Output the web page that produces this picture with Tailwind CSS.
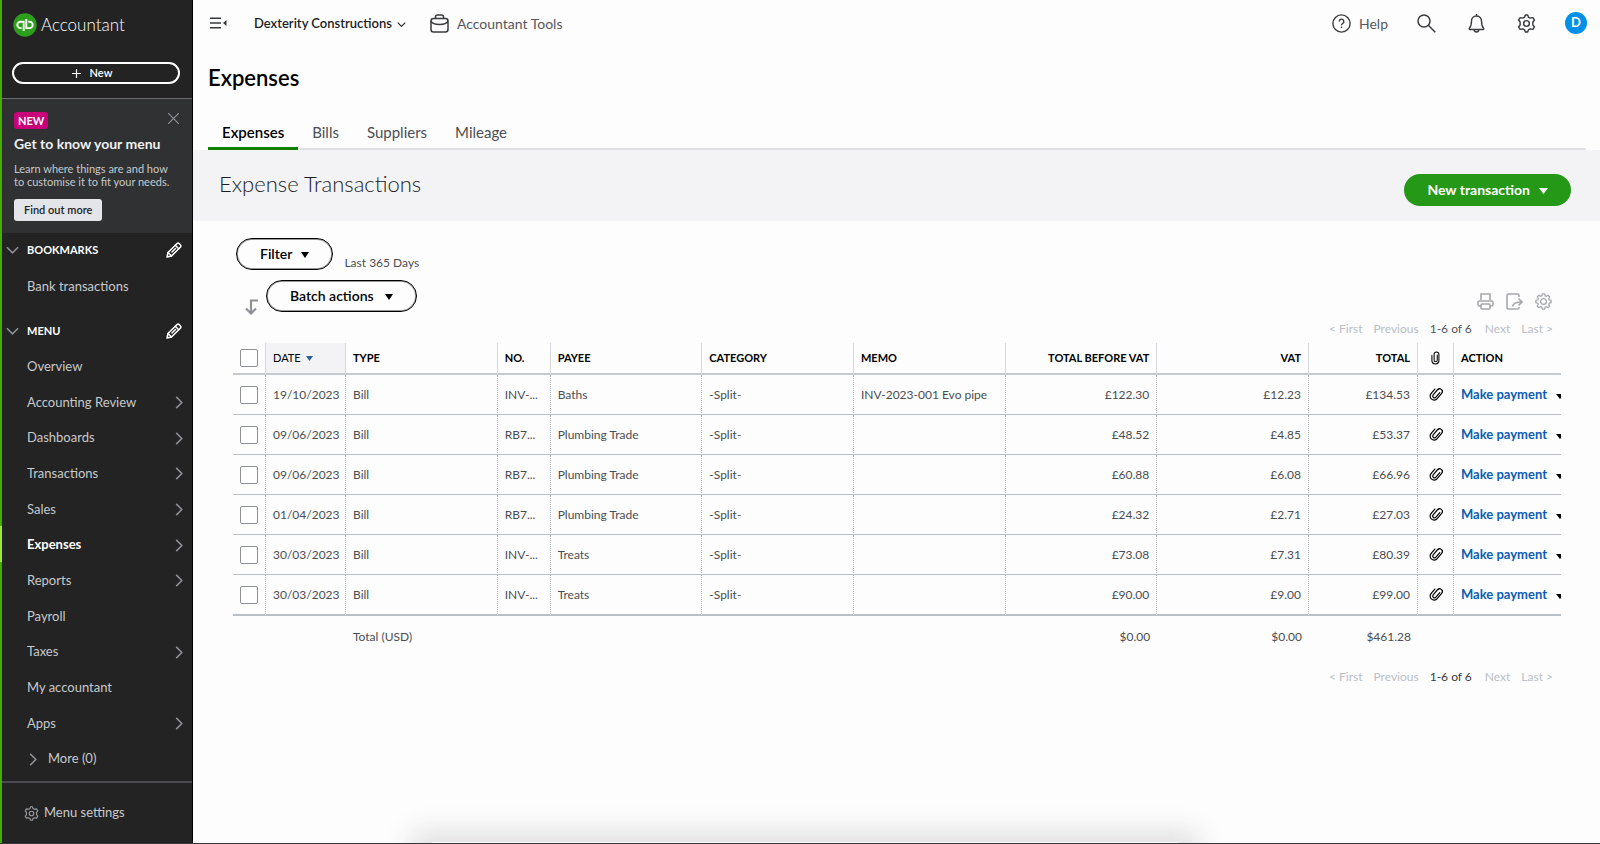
<!DOCTYPE html>
<html lang="en">
<head>
<meta charset="utf-8">
<title>Expenses</title>
<script src="https://cdn.jsdelivr.net/npm/@tailwindcss/browser@4"></script>
</head>
<body class="bg-[#fdfdfd] font-['Lato','Liberation_Sans',sans-serif] text-[#4b4d52]">
<svg class="hidden" aria-hidden="true">
  <symbol id="chev-right" viewBox="0 0 8 14"><path d="M1 1l6 6-6 6" fill="none" stroke="currentColor" stroke-width="1.7"/></symbol>
  <symbol id="chev-down" viewBox="0 0 14 8"><path d="M1 1l6 6 6-6" fill="none" stroke="currentColor" stroke-width="1.7"/></symbol>
  <symbol id="caret" viewBox="0 0 8 6" preserveAspectRatio="none"><path d="M0 0h8L4 6z" fill="currentColor"/></symbol>
  <symbol id="pencil" viewBox="0 0 16 16"><g fill="none" stroke="currentColor" stroke-width="1.5" stroke-linejoin="round" stroke-linecap="round"><path d="M1 15l1-4.500L10.800 1.700a1.800 1.800 0 0 1 2.500 0l1 1a1.800 1.800 0 0 1 0 2.500L5.500 14z"/><path d="M9.300 3.300l3.400 3.400M6 10l3.500-3.500M2 10.500L5.500 14"/></g></symbol>
  <symbol id="gear" viewBox="0 0 20 20"><g fill="none" stroke="currentColor" stroke-width="1.500" stroke-linejoin="round"><circle cx="10" cy="10" r="3"/><path d="M8 3.200L8.800 1h2.400l.8 2.200 1.900 1.100 2.800-.5 1.700 2.600-1.700 2v3.200l1.700 2-1.700 2.600-2.800-.5-1.900 1.100-.8 2.200H8.800L8 16.800l-1.900-1.100-2.800.5-1.700-2.600 1.700-2V8.400l-1.700-2 1.700-2.600 2.800.5z"/></g></symbol>
  <symbol id="cog" viewBox="0 0 20 20"><g fill="none" stroke="currentColor" stroke-width="1.500" stroke-linejoin="round"><circle cx="10" cy="10" r="3.400"/><path d="M8.600 1h2.800l.5 2.300 1.500.6 2-1.200 2 2-1.300 2 .7 1.400 2.200.5v2.800l-2.300.5-.6 1.500 1.200 2-2 2-2-1.300-1.400.7-.5 2.200H8.600l-.5-2.300-1.500-.6-2 1.200-2-2 1.300-2-.7-1.400L1 11.400V8.600l2.300-.5.6-1.500-1.200-2 2-2 2 1.300 1.400-.7z"/></g></symbol>
  <symbol id="clip" viewBox="0 0 10 16"><path d="M7 4.500v6a1.800 1.800 0 0 1-3.600 0V3.800a2.700 2.700 0 0 1 5.500 0v7a4 4 0 0 1-8 0V5" fill="none" stroke="currentColor" stroke-width="1.200" stroke-linecap="round"/></symbol>
</svg>

<div class="flex min-h-screen border-b border-[#34363a]">
  <aside class="flex w-[193px] shrink-0 border-r border-black bg-[#232323] text-[#c7c9cc]">
    <div class="flex w-[2px] shrink-0 flex-col bg-[#43b000]"><span class="mt-[526px] h-9 bg-[#98e83c]"></span></div>
    <div class="flex min-w-0 flex-1 flex-col">
      <div class="flex h-[50px] items-center gap-1 pl-[11px]">
        <svg class="h-6 w-6 shrink-0" viewBox="0 0 24 24" role="img" aria-label="QuickBooks"><circle cx="12" cy="12" r="11.700" fill="#2ca01c"/><g fill="none" stroke="#fff" stroke-width="1.900"><path d="M10.700 18V8.700H7.500a3.200 3.200 0 0 0 0 6.400h1.200M13.300 6v9.100h3.200a3.200 3.200 0 0 0 0-6.400h-1.200"/></g></svg>
        <span class="text-[17px] font-light text-white">Accountant</span>
      </div>
      <button class="mr-[12px] mb-[14px] ml-[10px] mt-[12px] flex h-[22px] items-center justify-center gap-[9px] rounded-full border-2 border-white pr-2 text-[11px] font-semibold text-white"><svg class="h-[9px] w-[9px]" viewBox="0 0 9 9"><path d="M4.500 0v9M0 4.500h9" stroke="#fff" stroke-width="1.200"/></svg>New</button>
      <section class="flex h-[135px] flex-col items-start border-t border-[#6b6c72] bg-[#2f3133] pt-[13px] pr-[13px] pl-3">
        <div class="flex w-full items-start justify-between">
          <span class="rounded-[3px] bg-[#c9007a] px-1 text-[11px] leading-[17px] font-bold text-white">NEW</span>
          <button aria-label="Close" class="pt-px"><svg class="h-[11px] w-[11px]" viewBox="0 0 11 11"><path d="M0 0l11 11M11 0L0 11" stroke="#8d9096" stroke-width="1.200"/></svg></button>
        </div>
        <h2 class="mt-[7px] text-[14px] leading-4 font-bold whitespace-nowrap text-[#f0f0f0]">Get to know your menu</h2>
        <p class="mt-[10px] text-[11px] leading-[13px] whitespace-nowrap">Learn where things are and how<br>to customise it to fit your needs.</p>
        <button class="mt-[11px] h-[22px] rounded-[3px] bg-[#e3e5e8] px-[10px] text-[11px] font-semibold text-[#232323]">Find out more</button>
      </section>
      <div class="flex h-[34px] items-center pr-[10px] pl-1 text-[11px] font-bold text-white"><svg class="mr-2 h-[8px] w-[13px] text-[#8d9096]"><use href="#chev-down"/></svg>BOOKMARKS<button aria-label="Edit bookmarks" class="ml-auto"><svg class="h-4 w-4"><use href="#pencil"/></svg></button></div>
      <a href="#" class="flex h-[40px] items-center pl-[25px] text-[13px]">Bank transactions</a>
      <div class="mt-[6px] flex h-[36px] items-center pr-[10px] pl-1 text-[11px] font-bold text-white"><svg class="mr-2 h-[8px] w-[13px] text-[#8d9096]"><use href="#chev-down"/></svg>MENU<button aria-label="Edit menu" class="ml-auto"><svg class="h-4 w-4"><use href="#pencil"/></svg></button></div>
      <nav id="menu" class="grid flex-1 auto-rows-fr text-[13px]"></nav>
      <a href="#" class="mt-[4px] flex h-[62px] items-center gap-[5px] border-t-2 border-[#4a4c50] pl-[22px] text-[13px]"><svg class="h-[15px] w-[15px] text-[#9a9ca0]"><use href="#gear"/></svg>Menu settings</a>
    </div>
  </aside>

  <main class="flex min-w-0 flex-1 flex-col">
    <header class="flex h-[46px] items-center pr-[13px] pl-[17px] text-[#393a3d]">
      <button aria-label="Collapse menu"><svg class="h-3 w-[17px]" viewBox="0 0 17 12"><path d="M0 1.200h11M0 6h11M0 10.800h11" stroke="currentColor" stroke-width="1.400"/><path d="M16.500 3v6L13 6z" fill="currentColor"/></svg></button>
      <button class="ml-[27px] flex items-center gap-[5px] pt-[2px] text-[13px] font-semibold text-[#1c1d1f]">Dexterity Constructions<svg class="h-[5px] w-[9px]"><use href="#chev-down"/></svg></button>
      <button class="ml-[24px] flex items-center gap-[8px] text-[14px] text-[#55575c]"><svg class="h-[19px] w-[19px]" viewBox="0 0 19 19" fill="none" stroke="#393a3d" stroke-width="1.500"><rect x="1" y="4.500" width="17" height="13.500" rx="2.500"/><path d="M5.500 4.500V3a2 2 0 0 1 2-2h4a2 2 0 0 1 2 2v1.500M1 7c1 2.500 4 3.500 8.500 3.500S17 9.500 18 7"/></svg>Accountant Tools</button>
      <div class="ml-auto flex items-center">
        <button class="flex items-center gap-2 text-[14px] text-[#55575c]"><svg class="h-[19px] w-[19px]" viewBox="0 0 19 19" fill="none" stroke="#393a3d" stroke-width="1.400"><circle cx="9.500" cy="9.500" r="8.600"/><path d="M7.200 7.500a2.300 2.300 0 1 1 3.400 2c-.8.5-1.100.8-1.100 1.700M9.500 12.600v1.500"/></svg>Help</button>
        <button aria-label="Search" class="ml-[29px]"><svg class="h-[19px] w-[19px]" viewBox="0 0 19 19" fill="none" stroke="currentColor" stroke-width="1.500"><circle cx="7" cy="7" r="6"/><path d="M11.300 11.300l7 7"/></svg></button>
        <button aria-label="Notifications" class="ml-8"><svg class="h-[19px] w-[17px]" viewBox="0 0 17 19" fill="none" stroke="currentColor" stroke-width="1.400"><path d="M8.500 0v2M8.500 2C5.500 2 3.500 4.300 3.500 7c0 4-.6 5.500-2 7-.6.8-.2 1.500.5 1.500h13c.7 0 1.100-.7.5-1.500-1.400-1.500-2-3-2-7 0-2.700-2-5-5-5zM6.300 16a2.200 2 0 0 0 4.400 0"/></svg></button>
        <button aria-label="Settings" class="ml-8"><svg class="h-[19px] w-[19px]"><use href="#gear"/></svg></button>
        <button class="ml-[29px] h-[22px] w-[22px] rounded-full bg-[#0090e8] text-[13px] font-bold text-white">D</button>
      </div>
    </header>

    <h1 class="mt-[18px] ml-[15px] text-[22px] leading-7 font-semibold text-black">Expenses</h1>
    <nav class="mt-[25px] mr-[14px] ml-[15px] flex h-[33px] border-b-2 border-[#e0e1e3] text-[15px] leading-[30px]">
      <a href="#" class="h-[33px] border-b-[3px] border-[#108000] px-[14px] font-semibold text-black">Expenses</a>
      <a href="#" class="px-[14px]">Bills</a>
      <a href="#" class="px-[14px]">Suppliers</a>
      <a href="#" class="px-[14px]">Mileage</a>
    </nav>

    <div class="flex h-[71px] items-start justify-between bg-[#f3f3f5] pr-[29px] pl-[26px]">
      <h2 class="pt-5 text-[22px] leading-7 font-light text-[#1c1d1f]">Expense Transactions</h2>
      <button class="mt-6 flex h-8 items-center gap-[9px] rounded-full bg-[#259818] px-[23px] pb-px text-[14px] font-bold text-white">New transaction<svg class="mt-[3px] h-[6px] w-[9px]"><use href="#caret"/></svg></button>
    </div>

    <div class="pr-[39px] pl-[40px]">
      <div class="flex items-end gap-[11px] pt-[17px] pl-[3px]">
        <button class="flex h-8 items-center gap-[9px] rounded-full border border-black px-[23px] pb-[2px] text-[14px] font-semibold text-black ring-1 ring-black/40 ring-inset">Filter<svg class="mt-[4px] h-[6px] w-2"><use href="#caret"/></svg></button>
        <span class="text-[12px] leading-[14px]">Last 365 Days</span>
      </div>
      <div class="flex h-[42px] items-start pt-[10px] pl-[12px]">
        <svg class="mt-[19px] mr-2 h-4 w-[13px]" viewBox="0 0 13 16" fill="none" stroke="#8d9096" stroke-width="2.200"><path d="M13 1.500H6V14M1 9.500l5 5 5-5"/></svg>
        <button class="flex h-8 items-center gap-[11px] rounded-full border border-black px-[23px] pb-[2px] text-[14px] font-semibold text-black ring-1 ring-black/40 ring-inset">Batch actions<svg class="mt-[4px] h-[6px] w-2"><use href="#caret"/></svg></button>
        <div class="mt-[13px] mr-[9px] ml-auto flex gap-3 text-[#a6a8ad]">
          <button aria-label="Print" ><svg class="h-[17px] w-[17px]" viewBox="0 0 17 17" fill="none" stroke="currentColor" stroke-width="1.600"><path d="M4 7V1h9v6M4 13H2.500A1.500 1.500 0 0 1 1 11.500V9.500A1.500 1.500 0 0 1 2.500 8h12A1.500 1.500 0 0 1 16 9.500v2a1.500 1.500 0 0 1-1.500 1.500H13"/><rect x="4" y="11" width="9" height="5" rx="1"/></svg></button>
          <button aria-label="Export"><svg class="h-[17px] w-[17px]" viewBox="0 0 17 17" fill="none" stroke="currentColor" stroke-width="1.600"><path d="M13 4V2.500A1.500 1.500 0 0 0 11.500 1h-9A1.500 1.500 0 0 0 1 2.500v12A1.500 1.500 0 0 0 2.500 16h9a1.500 1.500 0 0 0 1.500-1.500V14M6.500 13.500c.5-3 3-4.500 9-4.500M12.500 5.500L16 9l-3.500 3.500"/></svg></button>
          <button aria-label="Table settings"><svg class="h-[17px] w-[17px]"><use href="#cog"/></svg></button>
        </div>
      </div>
      <div class="mt-[9px] mr-[8px] flex justify-end gap-[11px] text-[12px] leading-4 text-[#babec5]"><a href="#">&lt; First</a><a href="#">Previous</a><span class="text-[#55575c]">1-6 of 6</span><a href="#" class="ml-[2px]">Next</a><a href="#">Last &gt;</a></div>

      <table class="mt-[6px] w-full table-fixed border-separate border-spacing-0 text-left text-[12px]">
        <colgroup><col class="w-[33px]"><col class="w-[80px]"><col><col class="w-[53px]"><col><col><col><col><col><col class="w-[109px]"><col class="w-[36px]"><col class="w-[107px]"></colgroup>
        <thead>
          <tr class="h-8 text-[11px] text-black *:border-b-2 *:border-b-[#c6c9ce] *:border-r-[#d4d7dc] *:px-[7px] *:font-bold *:not-last:border-r">
            <th><input type="checkbox" aria-label="Select all" class="block h-[18px] w-[18px] appearance-none rounded-[2px] border border-[#8d9096] bg-white"></th>
            <th class="bg-[#f3f3f5]"><span class="font-normal">DATE</span><svg class="ml-[5px] inline h-[5px] w-[7px] align-[1px] text-[#2c5f92]"><use href="#caret"/></svg></th>
            <th>TYPE</th><th>NO.</th><th>PAYEE</th><th>CATEGORY</th><th>MEMO</th>
            <th class="text-right">TOTAL BEFORE VAT</th><th class="text-right">VAT</th><th class="text-right">TOTAL</th>
            <th><svg class="mx-auto h-[14px] w-[9px]" role="img" aria-label="Attachments"><use href="#clip"/></svg></th>
            <th>ACTION</th>
          </tr>
        </thead>
        <tbody id="rows"></tbody>
        <tfoot>
          <tr class="h-[41px] *:px-[7px]"><td></td><td></td><td>Total (USD)</td><td></td><td></td><td></td><td></td><td class="text-right">$0.00</td><td class="text-right">$0.00</td><td class="text-right">$461.28</td><td></td><td></td></tr>
        </tfoot>
      </table>
      <div class="mt-[12px] mr-[8px] flex justify-end gap-[11px] text-[12px] leading-4 text-[#babec5]"><a href="#">&lt; First</a><a href="#">Previous</a><span class="text-[#393a3d]">1-6 of 6</span><a href="#" class="ml-[2px]">Next</a><a href="#">Last &gt;</a></div>
    </div>
    <div class="mt-auto overflow-hidden pt-[50px]"><div class="ml-[17%] h-px w-[53%] shadow-[0_10px_28px_20px_rgba(60,50,55,0.15)]"></div></div>
  </main>
</div>

<script>
const menu = [['Overview',0],['Accounting Review',1],['Dashboards',1],['Transactions',1],['Sales',1],['Expenses',1],['Reports',1],['Payroll',0],['Taxes',1],['My accountant',0],['Apps',1]];
document.getElementById('menu').innerHTML = menu.map(([name, sub]) =>
  `<a href="#" class="flex items-center justify-between pr-[9px] pl-[25px] ${name === 'Expenses' ? 'font-bold text-white' : ''}">${name}${sub ? '<svg class="h-[13px] w-[8px] text-[#8d9096]"><use href="#chev-right"/></svg>' : ''}</a>`).join('') +
  '<a href="#" class="flex items-center gap-[11px] pl-[27px]"><svg class="h-[13px] w-[8px] text-[#8d9096]"><use href="#chev-right"/></svg>More (0)</a>';

const bills = [
  ['19/10/2023','INV-...','Baths','INV-2023-001 Evo pipe','122.30','12.23','134.53'],
  ['09/06/2023','RB7...','Plumbing Trade','','48.52','4.85','53.37'],
  ['09/06/2023','RB7...','Plumbing Trade','','60.88','6.08','66.96'],
  ['01/04/2023','RB7...','Plumbing Trade','','24.32','2.71','27.03'],
  ['30/03/2023','INV-...','Treats','','73.08','7.31','80.39'],
  ['30/03/2023','INV-...','Treats','','90.00','9.00','99.00']];
document.getElementById('rows').innerHTML = bills.map(([date, no, payee, memo, net, vat, total]) => `
  <tr class="h-10 last:h-[41px] *:border-b *:border-b-[#babec5] *:px-[7px] *:not-last:border-r *:not-last:[border-right-style:dotted] *:border-r-[#b0b3b8] last:*:border-b-2">
    <td><input type="checkbox" aria-label="Select bill ${date}" class="block h-[18px] w-[18px] appearance-none rounded-[2px] border border-[#8d9096] bg-white"></td>
    <td>${date}</td><td>Bill</td><td>${no}</td><td>${payee}</td><td>-Split-</td><td>${memo}</td>
    <td class="text-right">£${net}</td><td class="text-right">£${vat}</td><td class="text-right">£${total}</td>
    <td class="pb-[2px]"><svg class="mx-auto h-4 w-[10px] rotate-[40deg] text-black" role="img" aria-label="Attachment"><use href="#clip"/></svg></td>
    <td><div class="-mr-[7px] flex items-center gap-[9px] overflow-hidden whitespace-nowrap"><a href="#" class="text-[13px] font-bold text-[#0b5cb5]">Make payment</a><svg class="mt-[3px] h-[5px] w-2 shrink-0 text-black"><use href="#caret"/></svg></div></td>
  </tr>`).join('');
</script>
</body>
</html>
